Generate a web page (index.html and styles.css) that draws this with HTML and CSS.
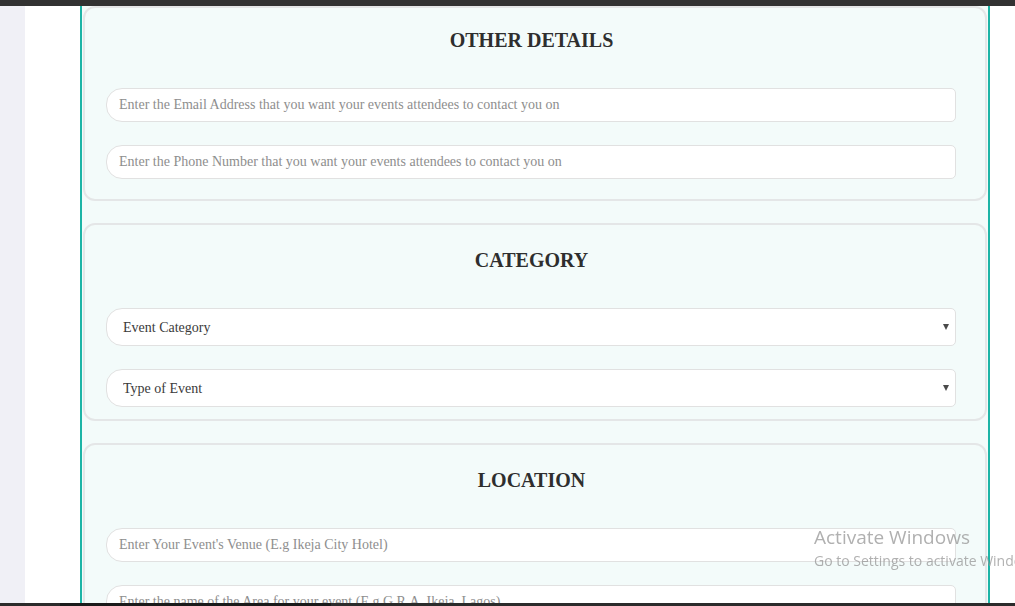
FILE: index.html
```html
<!DOCTYPE html>
<html lang="en">
<head>
<meta charset="utf-8">
<title>Create Event</title>
<link rel="stylesheet" href="styles.css">
</head>
<body>
<div class="topbar"></div>
<div class="main">
  <aside class="sidebar"></aside>
  <div class="content">
    <div class="panel">
      <section class="card card-first">
        <h2 class="card-title">OTHER DETAILS</h2>
        <div class="fields">
          <input class="field" type="email" placeholder="Enter the Email Address that you want your events attendees to contact you on">
          <input class="field" type="tel" placeholder="Enter the Phone Number that you want your events attendees to contact you on">
        </div>
      </section>
      <section class="card card-select">
        <h2 class="card-title">CATEGORY</h2>
        <div class="fields">
          <div class="select-wrap">
            <select class="field select"><option>Event Category</option></select>
          </div>
          <div class="select-wrap">
            <select class="field select"><option>Type of Event</option></select>
          </div>
        </div>
      </section>
      <section class="card">
        <h2 class="card-title">LOCATION</h2>
        <div class="fields">
          <input class="field" type="text" placeholder="Enter Your Event's Venue (E.g Ikeja City Hotel)">
          <input class="field" type="text" placeholder="Enter the name of the Area for your event (E.g G.R.A, Ikeja, Lagos)">
        </div>
      </section>
    </div>
  </div>
</div>
<div class="taskbar">
  <span class="tb-seg tb-a"></span>
  <span class="tb-seg tb-b"></span>
</div>
<div class="watermark">
  <div class="wm-title">Activate Windows</div>
  <div class="wm-sub">Go to Settings to activate Windows.</div>
</div>
</body>
</html>
```

FILE: styles.css
```css
* { box-sizing: border-box; }

html, body {
  margin: 0;
  padding: 0;
  height: 606px;
  overflow: hidden;
  background: #ffffff;
  font-family: "Liberation Serif", "Times New Roman", serif;
}

.topbar {
  height: 6px;
  background: #323232;
}

.main {
  display: flex;
  height: 597px;
  overflow: hidden;
}

.sidebar {
  width: 25px;
  flex: none;
  background: #f0f0f6;
}

.content {
  flex: 1;
  background: #ffffff;
  padding-left: 55px;
}

.panel {
  width: 910px;
  min-height: 100%;
  background: #f3fbfa;
  border-left: 2px solid #1db4a6;
  border-right: 2px solid #1db4a6;
  display: flex;
  flex-direction: column;
  gap: 22px;
}

.card {
  margin: 0 1px;
  border: 2px solid #e4e6e7;
  border-radius: 12px;
  background: #f3fbfa;
  padding: 24px 28px 20px 21px;
}

.card-first {
  padding-top: 21px;
}

.card-select {
  padding-bottom: 12px;
}

.card-title {
  margin: 0 0 37px;
  text-align: center;
  font-size: 20px;
  line-height: 22px;
  font-weight: bold;
  color: #2e2e2e;
}

.fields {
  display: flex;
  flex-direction: column;
  gap: 23px;
}

.field {
  display: block;
  width: 850px;
  height: 34px;
  border: 1px solid #e1e1e1;
  border-radius: 16px 5px 5px 16px;
  background: #ffffff;
  padding: 0 12px;
  font-family: "Liberation Serif", "Times New Roman", serif;
  font-size: 14px;
  color: #333333;
  outline: none;
}

.field::placeholder {
  color: #8e8e8e;
  opacity: 1;
}

.select-wrap {
  position: relative;
  width: 850px;
}

.select {
  height: 38px;
  padding: 0 16px;
  -webkit-appearance: none;
  appearance: none;
  color: #3a3a3a;
}

.select-wrap::after {
  content: "";
  position: absolute;
  right: 7px;
  top: 16px;
  border-left: 3.5px solid transparent;
  border-right: 3.5px solid transparent;
  border-top: 6px solid #4a4a4a;
  pointer-events: none;
}

.taskbar {
  height: 3px;
  background: #2b2b2b;
  display: flex;
}

.tb-seg { display: block; height: 3px; }
.tb-a { width: 73px; margin-left: 60px; background: #1a1a1a; }
.tb-b { width: 198px; background: #1a1a1a; }

.watermark {
  position: fixed;
  left: 814px;
  top: 525px;
  width: 201px;
  overflow: hidden;
  white-space: nowrap;
  font-family: "Open Sans", "Noto Sans", sans-serif;
  color: rgba(150, 150, 150, 0.75);
  pointer-events: none;
}

.wm-title {
  font-size: 19px;
  line-height: 25px;
}

.wm-sub {
  font-size: 14px;
  line-height: 21px;
}
```
